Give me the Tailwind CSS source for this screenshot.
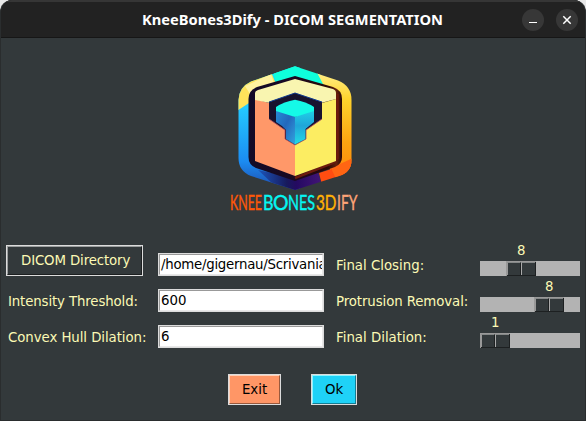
<!DOCTYPE html>
<html lang="en">
<head>
<meta charset="utf-8">
<title>KneeBones3Dify</title>
<script src="https://cdn.jsdelivr.net/npm/@tailwindcss/browser@4"></script>
</head>
<body class="bg-[#e8e8e8] w-[586px] h-[421px] overflow-hidden">
<div class="w-[586px] h-[421px] rounded-t-[12px] overflow-hidden bg-[#33393b] border-x border-b border-[#2a2d2e] flex flex-col font-['DejaVu_Sans',sans-serif] text-[13.33px] leading-4 text-[#fcf9b5]">
  <header class="h-[38px] shrink-0 bg-[#222222] border-t-2 border-t-[#363636] border-b border-b-[#161616] grid grid-cols-[1fr_auto_1fr] items-center">
    <span></span>
    <svg class="block w-[301px] h-[24px] -ml-[2px] overflow-visible" viewBox="0 0 301 24"><text x="0" y="16.8" textLength="301" lengthAdjust="spacingAndGlyphs" class="fill-white font-bold text-[13.5px] font-['Noto_Sans',sans-serif]">KneeBones3Dify - DICOM SEGMENTATION</text></svg>
    <div class="flex justify-end gap-3 pr-[7px]">
      <svg class="w-[22px] h-[22px]" viewBox="0 0 22 22"><circle cx="11" cy="11" r="11" fill="#373737"/><path d="M7 13.5h8" stroke="#fff"/></svg>
      <svg class="w-[22px] h-[22px]" viewBox="0 0 22 22"><circle cx="11" cy="11" r="11" fill="#373737"/><path d="M7.3 7.3l7.4 7.4M14.7 7.3l-7.4 7.4" stroke="#fff" stroke-width="1.5"/></svg>
    </div>
  </header>

  <div class="h-[202px] shrink-0 flex justify-center pt-[22px]">
    <svg class="w-[136px] h-[156px] ml-[4px] overflow-visible" viewBox="227 60 136 156">
      <defs>
        <linearGradient id="cy" x1="0" y1="0" x2="0" y2="1"><stop offset="0" stop-color="#0ff5ee"/><stop offset=".35" stop-color="#24c9ff"/><stop offset=".75" stop-color="#1b8cf2"/><stop offset="1" stop-color="#1f3fa0"/></linearGradient>
        <linearGradient id="or" x1="0" y1="0" x2="0" y2="1"><stop offset="0" stop-color="#fff59a"/><stop offset=".3" stop-color="#ffd22c"/><stop offset=".7" stop-color="#fca311"/><stop offset="1" stop-color="#ff8a0c"/></linearGradient>
        <linearGradient id="in" x1="0" y1="0" x2="1" y2="0"><stop offset="0" stop-color="#120c28"/><stop offset=".5" stop-color="#1a0820"/><stop offset=".85" stop-color="#2a0906"/><stop offset=".94" stop-color="#64200c"/><stop offset="1" stop-color="#260707"/></linearGradient>
        <linearGradient id="bl" x1="0" y1="0" x2="1" y2="1"><stop offset="0" stop-color="#268ed8"/><stop offset=".5" stop-color="#2368bd"/><stop offset="1" stop-color="#31a4df"/></linearGradient>
        <linearGradient id="br" x1="0" y1="0" x2="0" y2="1"><stop offset="0" stop-color="#1fdcea"/><stop offset=".5" stop-color="#20a5d9"/><stop offset="1" stop-color="#22dbe6"/></linearGradient>
        <linearGradient id="pu" x1="0" y1="0" x2="1" y2="0"><stop offset="0" stop-color="#1c55bb"/><stop offset=".45" stop-color="#171a5c"/><stop offset=".6" stop-color="#240a61"/><stop offset="1" stop-color="#431577"/></linearGradient>
        <clipPath id="o"><path d="M295 66.3L338 80.5Q351.500 86 351.500 100V160Q351.500 172 339 176L295 190L251 176Q238.500 171 238.500 158V100Q239 87 251 81.500Z"/></clipPath>
      </defs>
      <g clip-path="url(#o)">
        <path d="M235 60H300V195H235Z" fill="url(#cy)"/>
        <path d="M237 111L249 103L276 84L271 72L235 78Z" fill="#ffe35b"/>
        <path d="M245 86L271 74L274 83L250 94Z" fill="#fff3a0"/>
        <path d="M271 62H315L325 86H277Z" fill="#0fffdc"/>
        <path d="M314 67L355 82V175H330V90L323 84Z" fill="url(#or)"/>
        <path d="M353 162L319 173L322 185L355 176Z" fill="#ff4d11"/>
        <path d="M353 158L331 168L336 179L355 170Z" fill="#ff6513"/>
        <path d="M258 170L295 178L318 172L322 186L295 192L274 185Z" fill="url(#pu)"/>
      </g>
      <path d="M295 76L333 87Q342 90 342 99V157Q342 164 335 167L295 181L256 168Q248.500 165 248.500 157V99Q248.500 90 257 87Z" fill="url(#in)"/>
      <path d="M337.500 94V158L333 163L295 178" fill="none" stroke="#6b1a0e" stroke-width="2.500"/>
      <path d="M255 99L269 103L295 94V176L255 161Z" fill="#ff9869"/>
      <path d="M336 99L322 103L295 94V176L336 161Z" fill="#fced62"/>
      <path d="M255 93Q255 91 258 90L295 79L333 89Q336 90 336 93V99L321 103L295 93L270 103L255 100Z" fill="#f9f5b0"/>
      <path d="M295 93L322 102V119L306 130V139L295 145L285 139V130L269 119V102Z" fill="#18132f"/>
      <path d="M269 102L295 93L322 102" fill="none" stroke="#123c91" stroke-width="1"/>
      <path d="M269 119L285 130V139L295 145L306 139V130L322 119" fill="none" stroke="#b44f60" stroke-width=".8"/>
      <path d="M276 107L295 117V144.500L286 139V130L282 126L276 122Z" fill="url(#bl)"/>
      <path d="M314 107L295 117V144.500L305.500 139V129L314 122Z" fill="url(#br)"/>
      <path d="M295 99.700Q306 101.500 314 107V111L295 117L276 111V107Q284 101.500 295 99.700Z" fill="#15fae7"/>
      <g class="font-['Lato',sans-serif] text-[21px]" stroke-width=".4">
        <text x="230" y="210" textLength="32" lengthAdjust="spacingAndGlyphs" fill="#ff5808" stroke="#ff5808">KNEE</text>
        <g fill="#05f7f3" stroke="#05f7f3">
          <text x="263" y="210" textLength="10.500" lengthAdjust="spacingAndGlyphs">B</text>
          <text x="273" y="210" textLength="15.500" lengthAdjust="spacingAndGlyphs">O</text>
          <text x="288" y="210" textLength="27" lengthAdjust="spacingAndGlyphs">NES</text>
        </g>
        <text x="316" y="210" textLength="20.500" lengthAdjust="spacingAndGlyphs" fill="#ffb005" stroke="#ffb005">3D</text>
        <text x="337" y="210" textLength="20.500" lengthAdjust="spacingAndGlyphs" fill="#ffa578" stroke="#ffa578">IFY</text>
      </g>
    </svg>
  </div>

  <main class="grid grid-cols-[152px_166px_156px_100px] grid-rows-[36px_36px_36px] items-end pl-[5px]">
    <button class="w-[137px] h-[31px] border border-[#dcdcdc] text-left"><span class="block h-[29px] border border-t-[#9a9d9e] border-l-[#9a9d9e] border-r-[#1c1f20] border-b-[#1c1f20] pl-[13px] leading-[27px] whitespace-nowrap tracking-[-0.13px]">DICOM Directory</span></button>
    <div class="h-[23px] border border-[#dcdcdc] text-black"><div class="h-[21px] bg-white border border-t-[#999] border-l-[#999] border-r-[#e8e8e8] border-b-[#e8e8e8] pl-px leading-[19px] overflow-hidden whitespace-nowrap tracking-[-0.26px]">/home/gigernau/Scrivania</div></div>
    <span class="h-[23px] pl-3 leading-[25px]">Final Closing:</span>
    <div class="flex flex-col"><span class="w-2 text-center leading-[16px] mb-[2px] ml-[37px]">8</span><div class="h-[15px] bg-[#b3b3b3] pl-[26px]"><div class="w-[30px] h-[15px] flex border-l border-t border-[#999] bg-[#1d2021] pb-px pr-px"><i class="w-[14px] bg-[#33393b] border-l border-t border-l-[#999] border-t-[#858888] border-r border-r-[#1d2021]"></i><i class="w-[14px] bg-[#33393b] border-l border-t border-l-[#aaa] border-t-[#858888]"></i></div></div></div>

    <span class="h-[23px] pl-[2px] leading-[25px] whitespace-nowrap tracking-[-0.13px]">Intensity Threshold:</span>
    <div class="h-[23px] border border-[#dcdcdc] text-black"><div class="h-[21px] bg-white border border-t-[#999] border-l-[#999] border-r-[#e8e8e8] border-b-[#e8e8e8] pl-px leading-[19px]">600</div></div>
    <span class="h-[23px] pl-3 leading-[25px] whitespace-nowrap tracking-[-0.1px]">Protrusion Removal:</span>
    <div class="flex flex-col"><span class="w-2 text-center leading-[16px] mb-[2px] ml-[65px]">8</span><div class="h-[15px] bg-[#b3b3b3] pl-[54px]"><div class="w-[30px] h-[15px] flex border-l border-t border-[#999] bg-[#1d2021] pb-px pr-px"><i class="w-[14px] bg-[#33393b] border-l border-t border-l-[#999] border-t-[#858888] border-r border-r-[#1d2021]"></i><i class="w-[14px] bg-[#33393b] border-l border-t border-l-[#aaa] border-t-[#858888]"></i></div></div></div>

    <span class="h-[23px] pl-[2px] leading-[25px] whitespace-nowrap tracking-[-0.07px]">Convex Hull Dilation:</span>
    <div class="h-[23px] border border-[#dcdcdc] text-black"><div class="h-[21px] bg-white border border-t-[#999] border-l-[#999] border-r-[#e8e8e8] border-b-[#e8e8e8] pl-px leading-[19px]">6</div></div>
    <span class="h-[23px] pl-3 leading-[25px]">Final Dilation:</span>
    <div class="flex flex-col"><span class="w-2 text-center leading-[16px] mb-[2px] ml-[11px]">1</span><div class="h-[15px] bg-[#b3b3b3]"><div class="w-[30px] h-[15px] flex border-l border-t border-[#999] bg-[#1d2021] pb-px pr-px"><i class="w-[14px] bg-[#33393b] border-l border-t border-l-[#999] border-t-[#858888] border-r border-r-[#1d2021]"></i><i class="w-[14px] bg-[#33393b] border-l border-t border-l-[#aaa] border-t-[#858888]"></i></div></div></div>
  </main>

  <footer class="flex gap-[30px] pl-[227px] pt-[26px] text-black">
    <button class="w-[53px] h-[31px] border border-[#dcdcdc]"><span class="block h-[29px] bg-[#ff9666] border border-t-[#ffd0b8] border-l-[#ffd0b8] border-r-[#99593c] border-b-[#99593c] leading-[27px]">Exit</span></button>
    <button class="w-[46px] h-[31px] border border-[#dcdcdc]"><span class="block h-[29px] bg-[#1fd2f7] border border-t-[#8df4ff] border-l-[#8df4ff] border-r-[#137e94] border-b-[#137e94] leading-[27px]">Ok</span></button>
  </footer>
</div>
</body>
</html>
